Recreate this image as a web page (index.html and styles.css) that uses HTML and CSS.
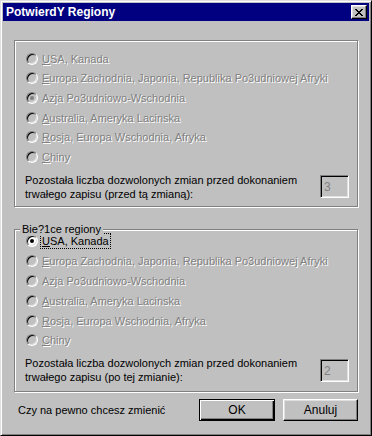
FILE: index.html
```html
<!DOCTYPE html>
<html lang="pl">
<head>
    <meta charset="UTF-8">
    <title>PotwierdY Regiony</title>
    <link rel="stylesheet" href="styles.css">
</head>
<body>

    <!-- Okno dialogowe -->
    <div class="window">
        <div class="titlebar">
            <span class="title">PotwierdY Regiony</span>
            <button class="close" type="button">
                <svg width="8" height="7" viewBox="0 0 8 7">
                    <path d="M0 0h2v1H0z M6 0h2v1H6z M1 1h2v1H1z M5 1h2v1H5z M2 2h4v1H2z M3 3h2v1H3z M2 4h4v1H2z M1 5h2v1H1z M5 5h2v1H5z M0 6h2v1H0z M6 6h2v1H6z" fill="#000"/>
                </svg>
            </button>
        </div>

        <div class="content">
            <!-- Obecny region (wszystko wyłączone) -->
            <div class="group group-current">
                <div class="option disabled"><span class="radio"></span><span class="label"><u>U</u>SA, Kanada</span></div>
                <div class="option disabled"><span class="radio"></span><span class="label"><u>E</u>uropa Zachodnia, Japonia, Republika Po3udniowej Afryki</span></div>
                <div class="option disabled"><span class="radio checked"></span><span class="label">Azja Po3udniowo-Wschodnia</span></div>
                <div class="option disabled"><span class="radio"></span><span class="label"><u>A</u>ustralia, Ameryka Lacinska</span></div>
                <div class="option disabled"><span class="radio"></span><span class="label"><u>R</u>osja, Europa Wschodnia, Afryka</span></div>
                <div class="option disabled"><span class="radio"></span><span class="label"><u>C</u>hiny</span></div>

                <div class="remaining">
                    <p>Pozostała liczba dozwolonych zmian przed dokonaniem<br>trwałego zapisu (przed tą zmianą):</p>
                    <div class="field">3</div>
                </div>
            </div>

            <!-- Nowy region -->
            <div class="group group-new">
                <span class="group-label">Bie?1ce regiony</span>
                <div class="option"><span class="radio checked"></span><span class="label focus"><u>U</u>SA, Kanada</span></div>
                <div class="option disabled"><span class="radio"></span><span class="label"><u>E</u>uropa Zachodnia, Japonia, Republika Po3udniowej Afryki</span></div>
                <div class="option disabled"><span class="radio"></span><span class="label">Azja Po3udniowo-Wschodnia</span></div>
                <div class="option disabled"><span class="radio"></span><span class="label"><u>A</u>ustralia, Ameryka Lacinska</span></div>
                <div class="option disabled"><span class="radio"></span><span class="label"><u>R</u>osja, Europa Wschodnia, Afryka</span></div>
                <div class="option disabled"><span class="radio"></span><span class="label"><u>C</u>hiny</span></div>

                <div class="remaining">
                    <p>Pozostała liczba dozwolonych zmian przed dokonaniem<br>trwałego zapisu (po tej zmianie):</p>
                    <div class="field">2</div>
                </div>
            </div>

            <!-- Pytanie i przyciski -->
            <div class="footer">
                <span class="question">Czy na pewno chcesz zmienić</span>
                <button class="btn btn-default" type="button">OK</button>
                <button class="btn" type="button">Anuluj</button>
            </div>
        </div>
    </div>

</body>
</html>
```

FILE: styles.css
```css
body {
    margin: 0;
    padding: 0;
    background-color: #c0c0c0;
    font-family: 'Liberation Sans', Arial, sans-serif;
    font-size: 11px;
    color: #000;
}

/* Ramka okna w stylu Win95 */
.window {
    box-sizing: border-box;
    width: 372px;
    height: 436px;
    background-color: #c0c0c0;
    border: 1px solid;
    border-color: #dfdfdf #000 #000 #dfdfdf;
    box-shadow: inset 1px 1px 0 #fff, inset -1px -1px 0 #808080;
    padding: 2px;
    display: flex;
    flex-direction: column;
}

.titlebar {
    height: 18px;
    background-color: #000080;
    display: flex;
    align-items: center;
    justify-content: space-between;
    padding: 0 2px 0 3px;
}

.title {
    color: #fff;
    font-weight: bold;
    font-size: 12px;
}

.close {
    box-sizing: border-box;
    width: 16px;
    height: 14px;
    padding: 0;
    background-color: #c0c0c0;
    border: 1px solid;
    border-color: #fff #000 #000 #fff;
    box-shadow: inset -1px -1px 0 #808080, inset 1px 1px 0 #dfdfdf;
    display: flex;
    align-items: center;
    justify-content: center;
}

.content {
    padding: 19px 11px 0;
    display: flex;
    flex-direction: column;
}

/* Ramka grupy (wytłaczana linia) */
.group {
    position: relative;
    border: 1px solid #808080;
    box-shadow: inset 1px 1px 0 #fff, 1px 1px 0 #fff;
}

.group-current {
    padding: 8px 0 5px;
}

.group-new {
    margin-top: 22px;
    padding: 2px 0 7px;
}

.group-label {
    position: absolute;
    top: -8px;
    left: 5px;
    padding: 0 2px;
    background-color: #c0c0c0;
    line-height: 14px;
}

.option {
    height: 19.6px;
    display: flex;
    align-items: center;
    padding-left: 11px;
}

.group-new .option {
    height: 19.8px;
}

.label {
    margin-left: 3px;
    padding: 0 1px;
    line-height: 14px;
    white-space: nowrap;
}

.label.focus {
    outline: 1px dotted #000;
}

.disabled .label {
    color: #808080;
    text-shadow: 1px 1px 0 #fff;
}

/* Przycisk radiowy */
.radio {
    box-sizing: border-box;
    width: 12px;
    height: 12px;
    border-radius: 50%;
    border: 1px solid;
    border-color: #808080 #fff #fff #808080;
    box-shadow: inset 1px 1px 0 #000, inset -1px -1px 0 #dfdfdf;
    background-color: #fff;
    display: flex;
    align-items: center;
    justify-content: center;
    flex-shrink: 0;
}

.disabled .radio {
    background-color: #c0c0c0;
}

.radio.checked::after {
    content: '';
    width: 4px;
    height: 4px;
    border-radius: 50%;
    background-color: #000;
}

.disabled .radio.checked::after {
    background-color: #808080;
}

.remaining {
    display: flex;
    align-items: center;
    justify-content: space-between;
    margin-top: 6px;
    padding: 0 8px 0 10px;
}

.remaining p {
    margin: 0;
    line-height: 14px;
}

.field {
    box-sizing: border-box;
    width: 29px;
    height: 23px;
    border: 1px solid;
    border-color: #808080 #fff #fff #808080;
    box-shadow: inset 1px 1px 0 #000, inset -1px -1px 0 #dfdfdf;
    color: #808080;
    padding: 4px 0 0 3px;
    font-size: 12px;
}

/* Pytanie i przyciski na dole */
.footer {
    display: flex;
    align-items: center;
    margin-top: 7px;
    height: 22px;
}

.question {
    flex: 1;
    padding-left: 4px;
}

.btn {
    box-sizing: border-box;
    width: 75px;
    height: 22px;
    padding: 0;
    font-family: inherit;
    font-size: 12px;
    color: #000;
    background-color: #c0c0c0;
    border: 1px solid;
    border-color: #fff #000 #000 #fff;
    box-shadow: inset -1px -1px 0 #808080, inset 1px 1px 0 #dfdfdf;
}

.btn-default {
    width: 76px;
    margin-right: 8px;
    border: 1px solid #000;
    box-shadow: inset 1px 1px 0 #fff, inset -1px -1px 0 #000, inset -2px -2px 0 #808080;
}
```
